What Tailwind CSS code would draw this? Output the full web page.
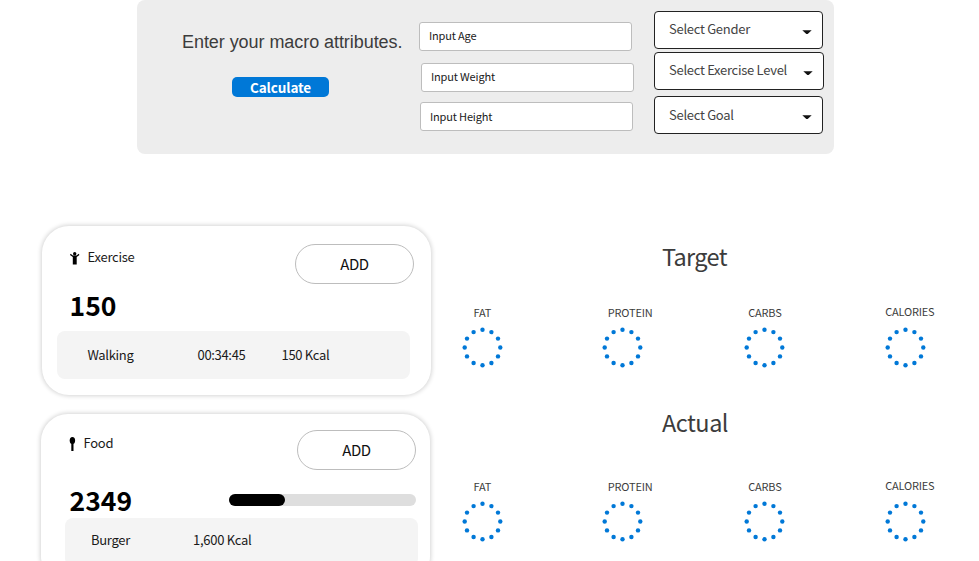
<!DOCTYPE html>
<html lang="en">
<head>
<meta charset="utf-8">
<title>Macro tracker</title>
<script src="https://cdn.jsdelivr.net/npm/@tailwindcss/browser@4"></script>
</head>
<body class="h-[561px] overflow-hidden bg-white font-['Noto_Sans_CJK_SC','Noto_Sans',sans-serif] text-[#1a1a1a]">
<svg class="hidden">
  <symbol id="dots" viewBox="-20.5 -20.5 41 41">
    <g fill="#0078d7">
      <circle cx="0" cy="-17.8" r="2.2"/><circle cx="8.9" cy="-15.4" r="2.2"/><circle cx="15.5" cy="-8.9" r="2.2"/>
      <circle cx="17.8" cy="0" r="2.2"/><circle cx="15.5" cy="8.9" r="2.2"/><circle cx="8.9" cy="15.5" r="2.2"/>
      <circle cx="0" cy="17.8" r="2.2"/><circle cx="-8.9" cy="15.5" r="2.2"/><circle cx="-15.5" cy="8.9" r="2.2"/>
      <circle cx="-17.8" cy="0" r="2.2"/><circle cx="-15.5" cy="-8.9" r="2.2"/><circle cx="-8.9" cy="-15.4" r="2.2"/>
    </g>
  </symbol>
  <symbol id="caret" viewBox="0 0 10 5"><path d="M0.3 0.3h9.4L6.2 3.6Q5 4.6 3.8 3.6z" fill="#111"/></symbol>
</svg>

<header class="ml-[137px] flex h-[154px] w-[697px] rounded-lg bg-[#ededed]">
  <div class="ml-[45px] w-[237px] pt-[30px]">
    <h1 class="whitespace-nowrap font-['Liberation_Sans',Arial,sans-serif] text-[18px] leading-6 tracking-[-0.06px] text-[#3c3c3c]">Enter your macro attributes.</h1>
    <button class="mt-[23px] ml-[50px] block h-5 w-[97px] rounded-[5px] bg-[#0078d7] text-[13.5px] leading-5 font-bold tracking-[-0.1px] text-white">Calculate</button>
  </div>
  <div class="w-[235px] pt-[22px] text-[11px] tracking-[-0.16px] text-[#1a1a1a]">
    <div class="h-[29px] w-[213px] rounded-[3px] border border-[#bdbdbd] bg-white pl-[9px] leading-[25px]">Input Age</div>
    <div class="mt-3 ml-[2px] h-[29px] w-[213px] rounded-[3px] border border-[#bdbdbd] bg-white pl-[9px] leading-[25px]">Input Weight</div>
    <div class="mt-[10px] ml-px h-[29px] w-[213px] rounded-[3px] border border-[#bdbdbd] bg-white pl-[9px] leading-[26px]">Input Height</div>
  </div>
  <div class="pt-[11px] text-[13px] tracking-[-0.28px] text-[#444]">
    <div class="flex h-[38px] w-[169px] justify-between rounded-[4px] border border-[#222] bg-white pr-[10px] pl-[14px] leading-[34px]">Select Gender<svg class="mt-[18px] h-[5px] w-[10px]"><use href="#caret"/></svg></div>
    <div class="mt-[3px] flex h-[38px] w-[170px] justify-between rounded-[4px] border border-[#222] bg-white pr-[10px] pl-[14px] leading-[34px]">Select Exercise Level<svg class="mt-[18px] h-[5px] w-[10px]"><use href="#caret"/></svg></div>
    <div class="mt-[6px] flex h-[38px] w-[169px] justify-between rounded-[4px] border border-[#222] bg-white pr-[10px] pl-[14px] leading-[35px]">Select Goal<svg class="mt-[18px] h-[5px] w-[10px]"><use href="#caret"/></svg></div>
  </div>
</header>

<main class="mt-[72px] flex">
  <section class="w-[462px]">
    <article class="ml-[42px] h-[169px] w-[389px] rounded-[27px] bg-white pt-[18px] shadow-[0_0_4px_1px_rgba(0,0,0,0.17)]">
      <div class="flex h-10 pl-[28px] pr-[17px]">
        <svg class="mt-[8px] h-[13px] w-[10px]" viewBox="0 0 10 13"><circle cx="4.7" cy="1.8" r="1.7"/><path d="M.6 1.8 2.9 3.4h3.6L8.8 1.8l.6 1.1L6.7 4.9V12.6H2.8V4.9L0 2.9z"/></svg>
        <h2 class="ml-[7.5px] text-[13px] leading-[25px] tracking-[-0.25px]">Exercise</h2>
        <button class="ml-auto h-10 w-[119px] rounded-full border border-[#bdbdbd] text-[15px] leading-[38px] tracking-[-0.4px] text-[#111]">ADD</button>
      </div>
      <p class="mt-[5px] h-8 pl-[27.5px] text-[26.5px] leading-8 font-bold text-black">150</p>
      <div class="mt-[10px] ml-[15px] grid h-[47.5px] w-[353px] grid-cols-[110px_84px_1fr] rounded-lg bg-[#f4f4f4] pl-[30.5px] text-[13px] leading-[47px] tracking-[-0.32px]">
        <span>Walking</span><span>00:34:45</span><span>150 Kcal</span>
      </div>
    </article>
    <article class="mt-[19px] ml-[41px] h-[169px] w-[389px] rounded-[27px] bg-white pt-[16px] shadow-[0_0_4px_1px_rgba(0,0,0,0.17)]">
      <div class="flex h-10 pl-[28px] pr-[14px]">
        <svg class="mt-[7px] h-[14px] w-[7px]" viewBox="0 0 7 14"><ellipse cx="3.4" cy="3.5" rx="2.7" ry="3.5"/><path d="M2.3 6h2.2v8H2.3z"/></svg>
        <h2 class="ml-[7.5px] text-[13px] leading-[25px] tracking-[-0.25px]">Food</h2>
        <button class="ml-auto h-10 w-[119px] rounded-full border border-[#bdbdbd] text-[15px] leading-[38px] tracking-[-0.4px] text-[#111]">ADD</button>
      </div>
      <div class="mt-[14px] flex h-8 pr-[14px] pl-[28.5px]">
        <p class="text-[26.5px] leading-8 font-bold text-black">2349</p>
        <div class="mt-[10px] ml-auto h-3 w-[187px] rounded-full bg-[#dedede]"><div class="h-3 rounded-full bg-black" style="width:30%"></div></div>
      </div>
      <div class="mt-[2px] ml-[24px] grid h-[47.5px] w-[353px] grid-cols-[102px_1fr] rounded-lg bg-[#f4f4f4] pl-[26px] text-[13px] leading-[43px] tracking-[-0.28px]">
        <span>Burger</span><span>1,600 Kcal</span>
      </div>
    </article>
  </section>

  <section class="w-[500px] text-[11px] leading-4 tracking-[-0.2px] text-[#3c3c3c]">
    <h2 class="mt-[14px] pl-[200px] text-[23.5px] leading-8 tracking-[-0.65px]">Target</h2>
    <div class="mt-[32px] grid grid-cols-[140.3px_141.4px_141.1px_74px]">
      <div><p class="pl-[11.5px]">FAT</p><svg class="mt-[7px] h-[41px] w-[41px]"><use href="#dots"/></svg></div>
      <div><p class="pl-[5.5px]">PROTEIN</p><svg class="mt-[7px] h-[41px] w-[41px]"><use href="#dots"/></svg></div>
      <div><p class="pl-[4.5px]">CARBS</p><svg class="mt-[7px] h-[41px] w-[41px]"><use href="#dots"/></svg></div>
      <div class="-mt-px"><p class="pl-[.5px]">CALORIES</p><svg class="mt-[8px] h-[41px] w-[41px]"><use href="#dots"/></svg></div>
    </div>
    <h2 class="mt-[38px] pl-[200px] text-[23.5px] leading-8 tracking-[-0.5px]">Actual</h2>
    <div class="mt-[40px] grid grid-cols-[140.3px_141.4px_141.1px_74px]">
      <div><p class="pl-[11.5px]">FAT</p><svg class="mt-[7px] h-[41px] w-[41px]"><use href="#dots"/></svg></div>
      <div><p class="pl-[5.5px]">PROTEIN</p><svg class="mt-[7px] h-[41px] w-[41px]"><use href="#dots"/></svg></div>
      <div><p class="pl-[4.5px]">CARBS</p><svg class="mt-[7px] h-[41px] w-[41px]"><use href="#dots"/></svg></div>
      <div class="-mt-px"><p class="pl-[.5px]">CALORIES</p><svg class="mt-[8px] h-[41px] w-[41px]"><use href="#dots"/></svg></div>
    </div>
  </section>
</main>
</body>
</html>
